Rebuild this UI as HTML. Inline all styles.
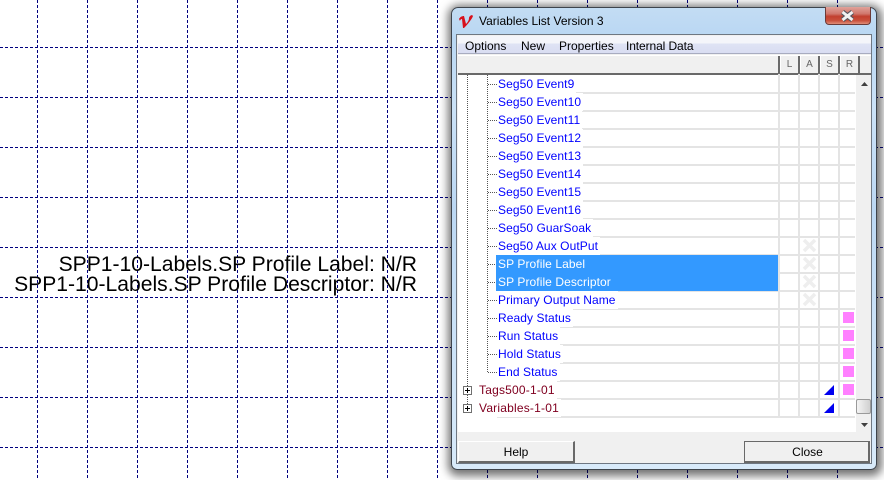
<!DOCTYPE html>
<html><head><meta charset="utf-8">
<style>
html,body{margin:0;padding:0;background:#fff;}
#root{position:relative;width:884px;height:480px;overflow:hidden;background:#fff;font-family:"Liberation Sans",sans-serif;}
.abs{position:absolute;}
.hg{position:absolute;left:0;width:884px;height:1px;background:repeating-linear-gradient(90deg,#000080 0 3px,transparent 3px 5px);}
.vg{position:absolute;top:0;width:1px;height:480px;background:repeating-linear-gradient(180deg,#000080 0 3px,transparent 3px 5px);}
.big{position:absolute;right:467px;font-size:21.1px;line-height:22px;color:#000;white-space:nowrap;}
#win{position:absolute;left:451px;top:7px;width:426px;height:463px;border-radius:7px 7px 6px 6px;border:1px solid #3e444c;box-sizing:border-box;background:linear-gradient(180deg,#c3dcf3 0,#b9d7f3 30px,#cbe2f7 100px,#bcd8f3 200px,#c9e1f7 300px,#d8eafa 460px);box-shadow:1px 2px 9px 4px rgba(0,0,0,.55);}
#client{position:absolute;left:457px;top:35px;width:414px;height:428px;background:#f0f0f0;outline:1px solid #6e7782;}
.row{position:absolute;font-size:12px;line-height:18px;color:#0000ff;white-space:nowrap;background:#fff;padding:0 2px 0 1px;letter-spacing:.08px;}
.tg{color:#800020;letter-spacing:.2px;left:478px;}
.rl{position:absolute;left:458px;width:397px;height:2px;background:#e4e4e4;}
.cl{position:absolute;top:74px;width:2px;height:343px;background:#e4e4e4;}
.hd{position:absolute;top:56px;height:18px;width:20px;background:#f0f0f0;border-left:1px solid #fff;border-right:2px solid #6a6a6a;box-sizing:border-box;font-size:10px;line-height:17px;text-align:center;color:#666;}
.dotv{position:absolute;width:1px;background:repeating-linear-gradient(180deg,#555 0 1px,transparent 1px 2px);}
.doth{position:absolute;height:1px;width:9px;background:repeating-linear-gradient(90deg,#555 0 1px,transparent 1px 2px);}
.pk{position:absolute;left:843px;width:11px;height:11px;background:#ff80ff;}
.x{position:absolute;left:802px;}
.box{position:absolute;left:463px;width:7px;height:7px;border:1px solid #707070;background:#fff;box-sizing:content-box;}
.box:before{content:"";position:absolute;left:1px;top:3px;width:5px;height:1px;background:#000;}
.box:after{content:"";position:absolute;left:3px;top:1px;width:1px;height:5px;background:#000;}
.menu{position:absolute;top:38px;font-size:12px;line-height:16px;color:#000;white-space:nowrap;}
.btn{position:absolute;top:441px;height:22px;background:#f0f0f0;box-sizing:border-box;font-size:12px;line-height:20px;text-align:center;color:#000;border-top:1px solid #fff;border-left:1px solid #fff;border-right:2px solid #696969;border-bottom:2px solid #696969;}
</style></head><body>
<div id="root">
<div class="hg" style="top:47px"></div><div class="hg" style="top:97px"></div><div class="hg" style="top:147px"></div><div class="hg" style="top:197px"></div><div class="hg" style="top:247px"></div><div class="hg" style="top:297px"></div><div class="hg" style="top:347px"></div><div class="hg" style="top:397px"></div><div class="hg" style="top:447px"></div>
<div class="vg" style="left:37px"></div><div class="vg" style="left:87px"></div><div class="vg" style="left:137px"></div><div class="vg" style="left:187px"></div><div class="vg" style="left:237px"></div><div class="vg" style="left:287px"></div><div class="vg" style="left:337px"></div><div class="vg" style="left:387px"></div><div class="vg" style="left:437px"></div><div class="vg" style="left:487px"></div><div class="vg" style="left:537px"></div><div class="vg" style="left:587px"></div><div class="vg" style="left:637px"></div><div class="vg" style="left:687px"></div><div class="vg" style="left:737px"></div><div class="vg" style="left:787px"></div><div class="vg" style="left:837px"></div>

<div class="big" style="top:254px">SPP1-10-Labels.SP Profile Label: N/R</div>
<div class="big" style="top:274px">SPP1-10-Labels.SP Profile Descriptor: N/R</div>

<div id="win"></div>
<svg class="abs" style="left:458px;top:14px" width="16" height="15" viewBox="0 0 16 15"><path d="M1 5 C2 3 4 2 6 2 L8 10 C10 8 11 6 11 4 C11 3 12 1.5 14 1 L15 2 C14 5 10 10 6 14 L5 14 L4 5 C3 5 2 6 2 7 Z" fill="#d8101c"/></svg>
<div class="abs" style="left:479px;top:13px;font-size:12px;line-height:16px;color:#000;white-space:nowrap;">Variables List Version 3</div>

<div class="abs" style="left:825px;top:7px;width:46px;height:18px;border:1px solid #6b3a38;border-top:none;border-radius:0 0 4px 4px;box-sizing:border-box;background:linear-gradient(180deg,#e0a29a 0,#d0776c 40%,#c2402f 55%,#c9503c 80%,#e08d78 100%);"></div>
<svg class="abs" style="left:840px;top:10px" width="15" height="12" viewBox="0 0 15 12"><path d="M2.5 2 L12.5 10 M12.5 2 L2.5 10" stroke="#55555f" stroke-width="5"/><path d="M2.5 2 L12.5 10 M12.5 2 L2.5 10" stroke="#f2f2f2" stroke-width="3"/></svg>

<div id="client"></div>
<div class="abs" style="left:458px;top:36px;width:413px;height:18px;background:linear-gradient(180deg,#f4f5fa 0,#f4f5fa 7px,#dfe3f4 8px,#d9ddf2 17px);border-bottom:1px solid #a8acc0;box-sizing:border-box;"></div>
<div class="menu" style="left:465px">Options</div>
<div class="menu" style="left:521px">New</div>
<div class="menu" style="left:559px">Properties</div>
<div class="menu" style="left:626px;letter-spacing:-.1px">Internal Data</div>

<div class="abs" style="left:458px;top:55px;width:413px;height:19px;background:#f0f0f0;border-top:1px solid #fff;box-sizing:border-box;"></div>
<div class="abs" style="left:458px;top:75px;width:398px;height:357px;background:#fff;"></div>
<div class="abs" style="left:856px;top:75px;width:15px;height:357px;background:#f0f0f0;"></div>
<div class="abs" style="left:458px;top:432px;width:413px;height:31px;background:#f0f0f0;"></div>

<div class="abs" style="left:778px;top:56px;width:2px;height:18px;background:#6a6a6a"></div>
<div class="hd" style="left:780px">L</div>
<div class="hd" style="left:800px">A</div>
<div class="hd" style="left:820px">S</div>
<div class="hd" style="left:840px">R</div>
<div class="abs" style="left:458px;top:73px;width:413px;height:2px;background:#696969;"></div>

<div class="rl" style="top:92px"></div><div class="rl" style="top:110px"></div><div class="rl" style="top:128px"></div><div class="rl" style="top:146px"></div><div class="rl" style="top:164px"></div><div class="rl" style="top:182px"></div><div class="rl" style="top:200px"></div><div class="rl" style="top:218px"></div><div class="rl" style="top:236px"></div><div class="rl" style="top:254px"></div><div class="rl" style="top:272px"></div><div class="rl" style="top:290px"></div><div class="rl" style="top:308px"></div><div class="rl" style="top:326px"></div><div class="rl" style="top:344px"></div><div class="rl" style="top:362px"></div><div class="rl" style="top:380px"></div><div class="rl" style="top:398px"></div><div class="rl" style="top:416px"></div>
<div class="cl" style="left:778px"></div><div class="cl" style="left:798px"></div><div class="cl" style="left:818px"></div><div class="cl" style="left:838px"></div>
<div class="abs" style="left:458px;top:75px;width:39px;height:343px;background:#fff"></div>

<div class="dotv" style="left:467px;top:75px;height:329px"></div>
<div class="dotv" style="left:487px;top:75px;height:297px"></div>
<div class="doth" style="left:488px;top:84px"></div><div class="doth" style="left:488px;top:102px"></div><div class="doth" style="left:488px;top:120px"></div><div class="doth" style="left:488px;top:138px"></div><div class="doth" style="left:488px;top:156px"></div><div class="doth" style="left:488px;top:174px"></div><div class="doth" style="left:488px;top:192px"></div><div class="doth" style="left:488px;top:210px"></div><div class="doth" style="left:488px;top:228px"></div><div class="doth" style="left:488px;top:246px"></div><div class="doth" style="left:488px;top:264px"></div><div class="doth" style="left:488px;top:282px"></div><div class="doth" style="left:488px;top:300px"></div><div class="doth" style="left:488px;top:318px"></div><div class="doth" style="left:488px;top:336px"></div><div class="doth" style="left:488px;top:354px"></div><div class="doth" style="left:488px;top:372px"></div>

<div class="row" style="left:497px;top:75px">Seg50 Event9</div>
<div class="row" style="left:497px;top:93px">Seg50 Event10</div>
<div class="row" style="left:497px;top:111px">Seg50 Event11</div>
<div class="row" style="left:497px;top:129px">Seg50 Event12</div>
<div class="row" style="left:497px;top:147px">Seg50 Event13</div>
<div class="row" style="left:497px;top:165px">Seg50 Event14</div>
<div class="row" style="left:497px;top:183px">Seg50 Event15</div>
<div class="row" style="left:497px;top:201px">Seg50 Event16</div>
<div class="row" style="left:497px;top:219px">Seg50 GuarSoak</div>
<div class="row" style="left:497px;top:237px">Seg50 Aux OutPut</div>
<div class="abs" style="left:496px;top:255px;width:282px;height:36px;background:#3399ff;"></div>
<div class="row" style="left:497px;top:255px;background:transparent;color:#fff">SP Profile Label</div>
<div class="row" style="left:497px;top:273px;background:transparent;color:#fff">SP Profile Descriptor</div>
<div class="row" style="left:497px;top:291px">Primary Output Name</div>
<div class="row" style="left:497px;top:309px">Ready Status</div>
<div class="row" style="left:497px;top:327px">Run Status</div>
<div class="row" style="left:497px;top:345px">Hold Status</div>
<div class="row" style="left:497px;top:363px">End Status</div>
<div class="row tg" style="top:381px">Tags500-1-01</div>
<div class="row tg" style="top:399px">Variables-1-01</div>
<div class="box" style="top:386px"></div>
<div class="box" style="top:404px"></div>

<svg class="x" style="top:238px" width="15" height="15" viewBox="0 0 15 15"><path d="M2 2 L13 13 M13 2 L2 13" stroke="#eeeeee" stroke-width="3.5"/></svg>
<svg class="x" style="top:256px" width="15" height="15" viewBox="0 0 15 15"><path d="M2 2 L13 13 M13 2 L2 13" stroke="#eeeeee" stroke-width="3.5"/></svg>
<svg class="x" style="top:274px" width="15" height="15" viewBox="0 0 15 15"><path d="M2 2 L13 13 M13 2 L2 13" stroke="#eeeeee" stroke-width="3.5"/></svg>
<svg class="x" style="top:292px" width="15" height="15" viewBox="0 0 15 15"><path d="M2 2 L13 13 M13 2 L2 13" stroke="#eeeeee" stroke-width="3.5"/></svg>

<div class="pk" style="top:312px"></div><div class="pk" style="top:330px"></div><div class="pk" style="top:348px"></div><div class="pk" style="top:366px"></div><div class="pk" style="top:384px"></div>
<svg class="abs" style="left:824px;top:385px" width="10" height="10"><path d="M0 10 L10 0 L10 10 Z" fill="#0000f0"/></svg>
<svg class="abs" style="left:824px;top:403px" width="10" height="10"><path d="M0 10 L10 0 L10 10 Z" fill="#0000f0"/></svg>

<svg class="abs" style="left:860px;top:81px" width="9" height="6"><path d="M1 5 L4.5 1 L8 5 Z" fill="#404040"/></svg>
<svg class="abs" style="left:860px;top:422px" width="9" height="6"><path d="M1 1 L8 1 L4.5 5 Z" fill="#404040"/></svg>
<div class="abs" style="left:856px;top:399px;width:15px;height:15px;background:linear-gradient(90deg,#f4f4f4,#d0d0d0);border:1px solid #9a9a9a;border-radius:2px;box-sizing:border-box;"></div>

<div class="btn" style="left:458px;width:117px">Help</div>
<div class="btn" style="left:744px;width:126px;border-left:1px solid #696969;border-top:1px solid #696969;padding-left:2px">Close</div>
</div>
</body></html>
